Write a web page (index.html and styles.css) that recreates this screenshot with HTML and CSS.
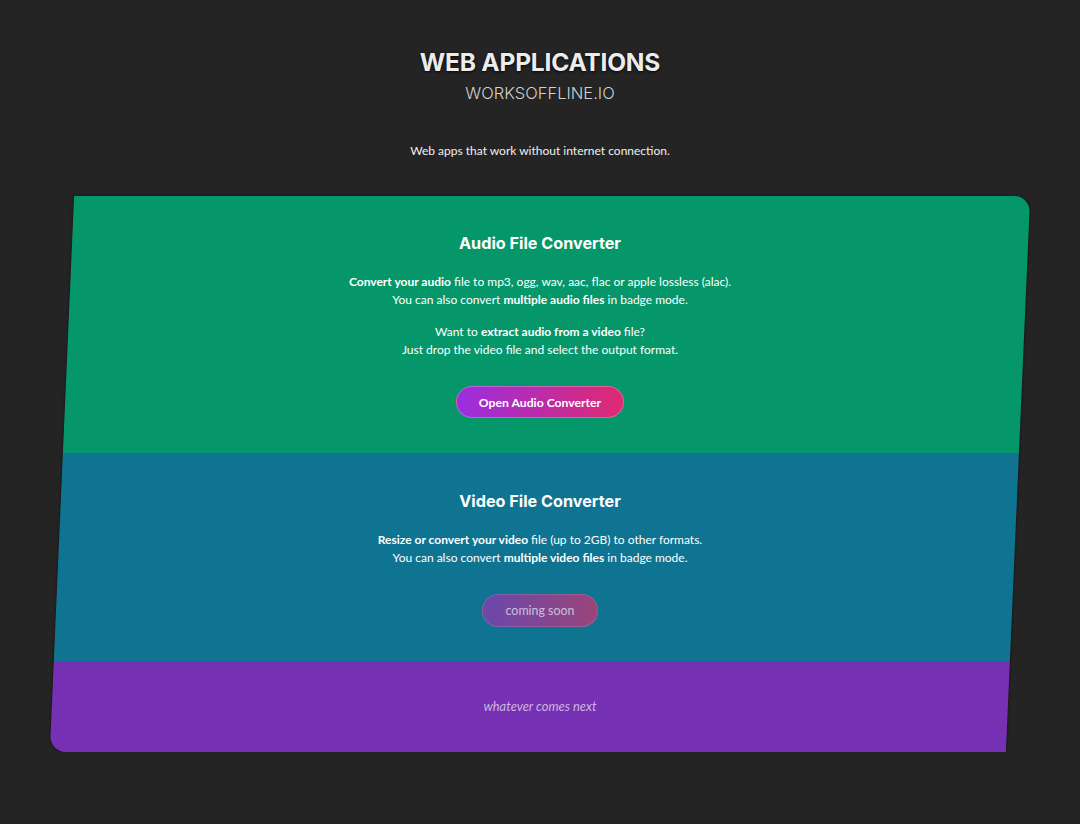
FILE: index.html
```html
<!DOCTYPE html>
<html lang="en">
<head>
<meta charset="utf-8">
<title>Web Applications - worksoffline.io</title>
<link rel="stylesheet" href="styles.css">
</head>
<body>
<header class="header">
  <h1 class="title">WEB APPLICATIONS</h1>
  <div class="subtitle">WORKSOFFLINE.IO</div>
  <p class="tagline">Web apps that work without internet connection.</p>
</header>
<main class="card">
  <section class="app app-audio">
    <h2 class="app-title">Audio File Converter</h2>
    <p class="app-text"><b>Convert your audio</b> file to mp3, ogg, wav, aac, flac or apple lossless (alac).<br>You can also convert <b>multiple audio files</b> in badge mode.</p>
    <p class="app-text app-text-second">Want to <b>extract audio from a video</b> file?<br>Just drop the video file and select the output format.</p>
    <a class="btn" href="#">Open Audio Converter</a>
  </section>
  <section class="app app-video">
    <h2 class="app-title">Video File Converter</h2>
    <p class="app-text"><b>Resize or convert your video</b> file (up to 2GB) to other formats.<br>You can also convert <b>multiple video files</b> in badge mode.</p>
    <span class="btn btn-soon">coming soon</span>
  </section>
  <section class="app app-next">
    <p class="next">whatever comes next</p>
  </section>
</main>
</body>
</html>
```

FILE: styles.css
```css
html, body {
  margin: 0;
  padding: 0;
  background: #242424;
}
body {
  font-family: "Lato", "Liberation Sans", sans-serif;
  color: #fff;
  -webkit-font-smoothing: antialiased;
}
.header {
  text-align: center;
  padding-top: 47px;
}
.title {
  margin: 0;
  font-family: "Inter", "Liberation Sans", sans-serif;
  font-size: 24.5px;
  line-height: 30px;
  font-weight: 700;
  color: #ececec;
  letter-spacing: -0.2px;
  text-shadow: 0 1px 3px rgba(0,0,0,0.9);
}
.subtitle {
  margin-top: 5px;
  font-family: "Inter", "Liberation Sans", sans-serif;
  font-size: 16.5px;
  line-height: 22px;
  font-weight: 300;
  color: #d0d0d0;
}
.tagline {
  margin: 38px 0 0;
  font-size: 12px;
  line-height: 18px;
  color: #f0f0f0;
}
.card {
  position: relative;
  isolation: isolate;
  margin: 36px 62px 0;
}
.card::before {
  content: "";
  position: absolute;
  inset: 0;
  z-index: -1;
  transform: skewX(-2.5deg);
  border-radius: 0 16px 0 16px;
  background: linear-gradient(180deg,
    #05976a 0, #05976a 257px,
    #0f7491 257px, #0f7491 465px,
    #7530b4 465px, #7530b4 100%);
  box-shadow: 0 0 3px rgba(0,0,0,0.6);
}
.app {
  text-align: center;
  display: flex;
  flex-direction: column;
  align-items: center;
}
.app-audio { padding: 36px 0 35px; }
.app-video { padding: 37px 0 34px; }
.app-next { padding: 36px 0 37px; }
.app-title {
  margin: 0;
  font-family: "Inter", "Liberation Sans", sans-serif;
  font-size: 16.2px;
  line-height: 22px;
  font-weight: 700;
}
.app-text {
  margin: 19px 0 0;
  font-size: 12px;
  line-height: 18px;
}
.app-text-second { margin-top: 14px; }
.app-text b { font-weight: 700; }
.btn {
  margin-top: 27px;
  display: inline-flex;
  align-items: center;
  justify-content: center;
  height: 32px;
  box-sizing: border-box;
  padding: 0 22px;
  border-radius: 16px;
  border: 1px solid rgba(255,255,255,0.25);
  background: linear-gradient(90deg, #9a2ee0, #de2a72);
  color: #fff;
  font-size: 12.2px;
  font-weight: 700;
  text-decoration: none;
}
.btn-soon {
  height: 33px;
  padding: 0 23px;
  background: linear-gradient(90deg, #6a48ab, #9a4579);
  border-color: rgba(255,255,255,0.12);
  color: #c9c0dc;
  font-weight: 400;
  font-size: 12.4px;
}
.next {
  margin: 0;
  font-size: 12.9px;
  line-height: 18px;
  font-style: italic;
  color: #cbb7dc;
}
```
